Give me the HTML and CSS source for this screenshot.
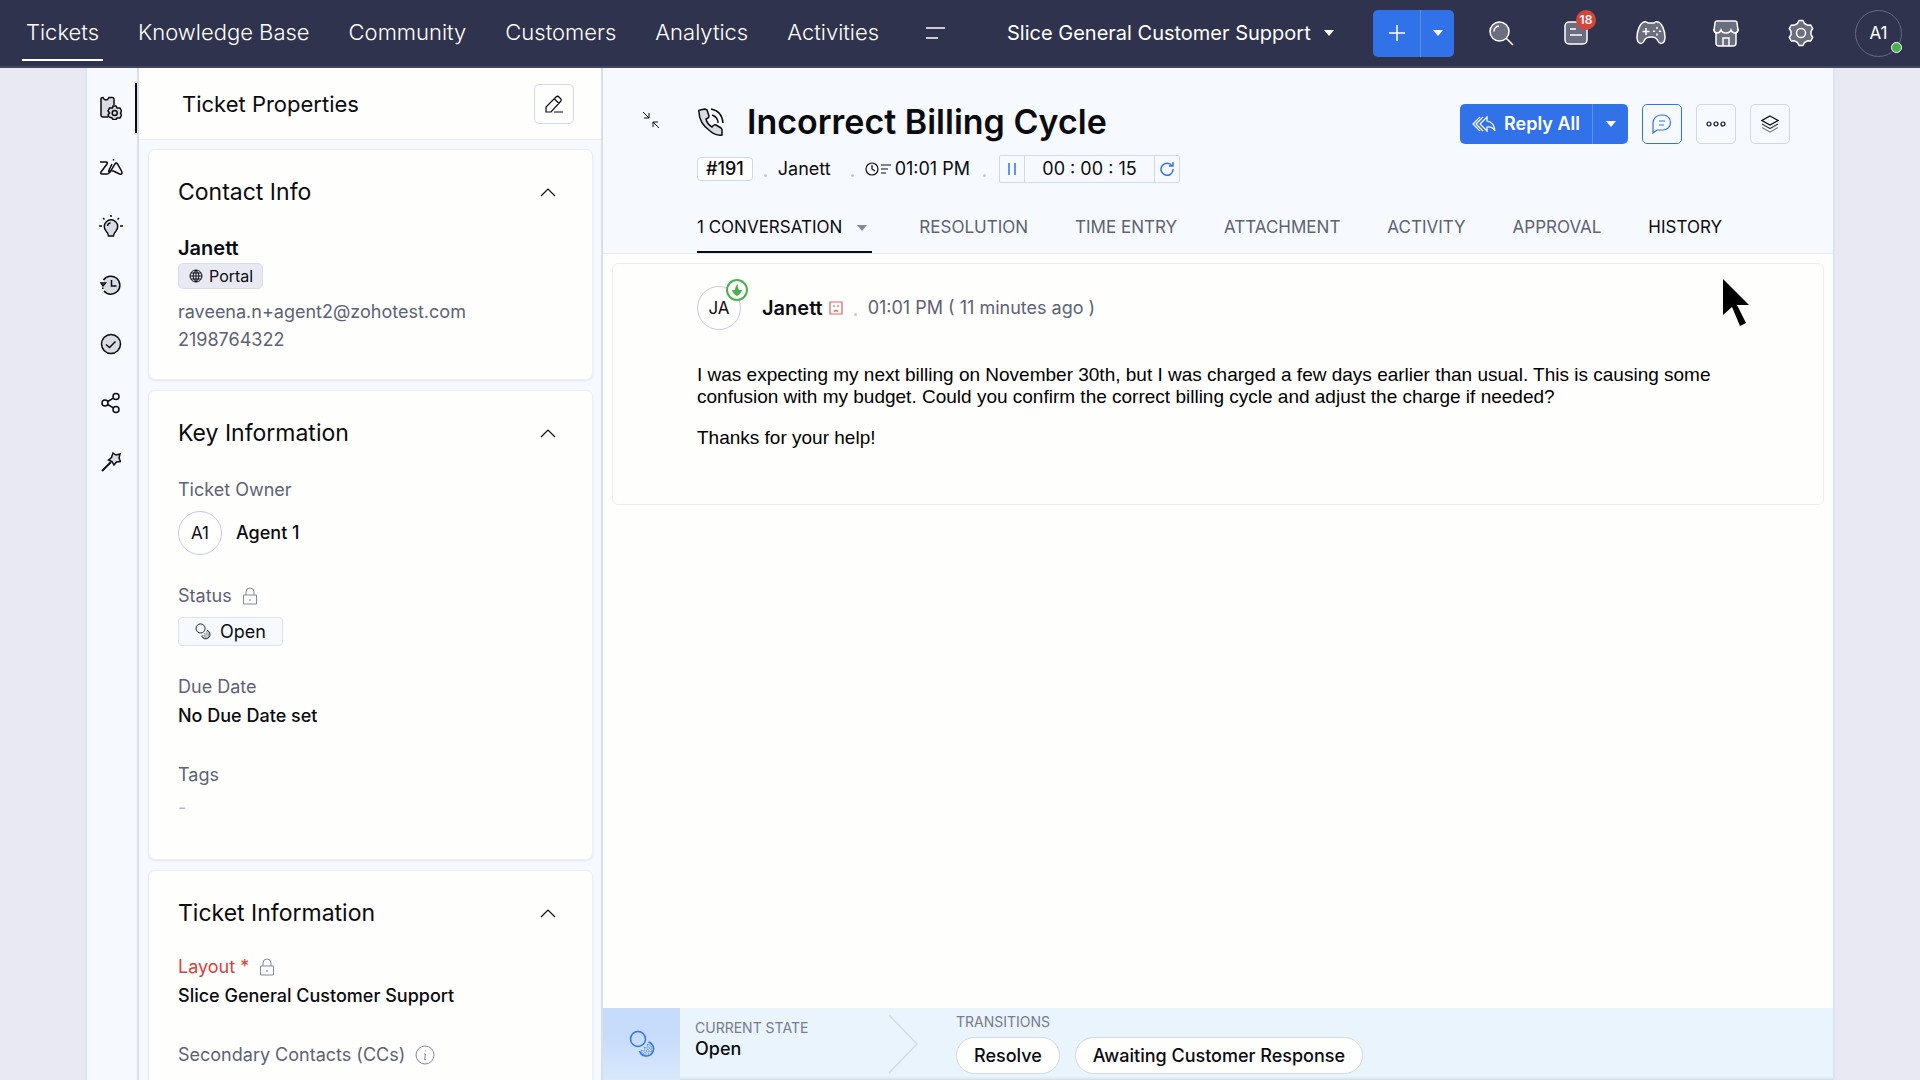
FILE: index.html
```html
<!DOCTYPE html>
<html lang="en">

<head>
    <meta charset="UTF-8">
    <meta name="viewport" content="width=device-width, initial-scale=1.0">
    <title>#191 Incorrect Billing Cycle</title>
    <link rel="stylesheet" href="styles.css">
</head>

<body>
    <!-- Shared icons -->
    <svg class="sprite" aria-hidden="true">
        <symbol id="caret" viewBox="0 0 12 8"><path d="M1 1h10L6 7z" fill="currentColor" stroke="none"/></symbol>
        <symbol id="chevron" viewBox="0 0 16 10"><path d="M1 9l7-7 7 7"/></symbol>
        <symbol id="lock" viewBox="0 0 16 18"><path d="M1.500 8h13v9h-13zM4 8V5a4 4 0 0 1 8 0v3M8 12v2"/></symbol>
        <symbol id="status" viewBox="0 0 26 28">
            <circle cx="9" cy="9" r="7.500"/>
            <path d="M19.500 12a7.200 7.200 0 1 1-9 9"/>
            <path d="M19 14v10M16 17v9M22 16v8M13 20v4M18 15h4M15 18h9M12 21h12M14 24h8" stroke-dasharray="1 1.500" stroke-width="1"/>
        </symbol>
    </svg>

    <header class="navbar">
        <nav class="nav-links">
            <a class="active" href="#">Tickets</a>
            <a href="#">Knowledge Base</a>
            <a href="#">Community</a>
            <a href="#">Customers</a>
            <a href="#">Analytics</a>
            <a href="#">Activities</a>
            <button class="icon-button" type="button" aria-label="More modules">
                <svg width="20" height="14" viewBox="0 0 20 14"><path d="M1 2h19M1 12h12"/></svg>
            </button>
        </nav>

        <div class="nav-tools">
            <div class="department">
                <select aria-label="Department">
                    <option>Slice General Customer Support</option>
                </select>
                <svg width="12" height="8"><use href="#caret"/></svg>
            </div>
            <div class="split-button">
                <button class="add" type="button" aria-label="Add">
                    <svg width="18" height="18" viewBox="0 0 18 18"><path d="M9 1v16M1 9h16"/></svg>
                </button>
                <button class="more" type="button" aria-label="Add options">
                    <svg width="12" height="8"><use href="#caret"/></svg>
                </button>
            </div>
            <div class="nav-icons">
                <button class="icon-button" type="button" aria-label="Search">
                    <svg width="26" height="26" viewBox="0 0 26 26"><circle class="tint" cx="11.500" cy="11.500" r="9.500"/><path d="M18.500 18.500L25 25M6 11.500A5.500 5.500 0 0 1 11 6"/></svg>
                </button>
                <button class="icon-button" type="button" aria-label="Notifications">
                    <svg width="26" height="26" viewBox="0 0 26 26"><rect class="tint" x="2" y="2" width="22" height="22" rx="4"/><path d="M7 9h6M7 15h12"/></svg>
                    <span class="count">18</span>
                </button>
                <button class="icon-button" type="button" aria-label="Gamescope">
                    <svg width="30" height="26" viewBox="0 0 30 26"><path class="tint" d="M8 2q2-1 4 1h6q2-2 4-1c4 1 7 9 7 15 0 7-5 8-7 4-1-3-3-4-7-4s-6 1-7 4c-2 4-7 3-7-4C1 11 4 3 8 2z"/><path d="M10 8v7M6.500 11.500h7"/><path d="M21 7.500v1M21 14v1M17.500 11.300h1M23.500 11.300h1" stroke-linecap="round"/></svg>
                </button>
                <button class="icon-button" type="button" aria-label="Marketplace">
                    <svg width="28" height="28" viewBox="0 0 28 28"><path class="tint" d="M5 2h18q2 0 2 2l1 7q0 2-2 3v10q0 3-3 3H7q-3 0-3-3V14q-2-1-2-3l1-7q0-2 2-2z"/><path d="M2 10q0 4 3 4t4-3q1 3 5 3t5-3q1 3 4 3t3-4M11 27v-8h6v8"/></svg>
                </button>
                <button class="icon-button" type="button" aria-label="Setup">
                    <svg width="26" height="28" viewBox="0 0 26 28"><path class="tint" stroke-linejoin="round" d="M11 1.500h4l1.500 3 3 1.700 3.200-.2 2 3.500-1.700 2.800v3.400l1.700 2.800-2 3.500-3.200-.2-3 1.700-1.500 3h-4l-1.500-3-3-1.700-3.200.2-2-3.500L3 15.700v-3.400L1.300 9.500l2-3.500 3.200.2 3-1.700z"/><circle cx="13" cy="14" r="4.500"/></svg>
                </button>
            </div>
            <button class="profile" type="button" aria-label="Profile">A1<span class="online"></span></button>
        </div>
    </header>

    <div class="workspace">
        <aside class="rail">
            <a class="active" href="#" aria-label="Ticket properties">
                <svg width="22" height="24" viewBox="0 0 22 24"><path class="tint" d="M8 21H3q-2 0-2-2V3q0-1.500 2-1.500 1 2.500 3 2.500t3-2.500h3q2 0 2 2V9"/><path class="tint" d="M13 10h3l1 2 3 0 1.500 3-1 2 1 2-1.500 3h-3l-1 1.500h-3L12 22l-3-1-1-2 1.500-2L8 15l1.500-3h3z"/><circle cx="14.700" cy="17" r="2.500"/></svg>
            </a>
            <a href="#" aria-label="Zia">
                <svg width="24" height="18" viewBox="0 0 24 18"><path d="M1 4h6q2 0 1 2L2 14q-1 2 1 2h5q2 0 3-2l5-8q1-2 2.500 0l4 7q1.500 4-2 3l-6-3q-3-1-4.500 1M13 6l-3 6q-1 3 1.500 2"/><path d="M14.500 1.500v.5" stroke-linecap="round"/></svg>
            </a>
            <a href="#" aria-label="Suggestions">
                <svg width="24" height="24" viewBox="0 0 24 24"><path class="tint" d="M9.500 22q-.5-3-2.500-5a6.700 6.700 0 1 1 10 0q-2 2-2.500 5zM8.500 12q.5-3 3-3"/><path d="M12 1v2M4 4l1.500 1.500M20 4l-1.500 1.500M0 12h3M21 12h3"/></svg>
            </a>
            <a href="#" aria-label="History">
                <svg width="22" height="22" viewBox="0 0 22 22"><path class="tint" d="M3.500 6A9 9 0 1 1 4 17"/><path d="M1 9h4.500L3 12zM11.500 6v6h5M2.500 13.500l.5 1.500"/></svg>
            </a>
            <a href="#" aria-label="Approvals">
                <svg width="22" height="22" viewBox="0 0 22 22"><circle class="tint" cx="11" cy="11" r="9.500"/><path d="M6 11.500l3.500 3 6-6"/></svg>
            </a>
            <a href="#" aria-label="Share">
                <svg width="20" height="22" viewBox="0 0 20 22"><circle cx="4" cy="11" r="3"/><circle cx="15" cy="4.500" r="3"/><circle cx="15" cy="17.500" r="3"/><path d="M6.700 9.500l5.700-3.400M6.700 12.500l5.700 3.400"/></svg>
            </a>
            <a href="#" aria-label="Macros">
                <svg width="20" height="20" viewBox="0 0 20 20"><path class="tint" d="M12 1l3 2 4-1-1 4 1.500 3.500-4 .5-2.500 3-2-3.500L7.500 8l3-2.500z"/><path d="M1 19l9-9" stroke-width="2"/></svg>
            </a>
        </aside>

        <section class="properties">
            <div class="properties-header">
                <h2>Ticket Properties</h2>
                <button class="square-button" type="button" aria-label="Edit">
                    <svg width="20" height="18" viewBox="0 0 20 18"><path d="M2 17v-5L12 2q1.500-1.500 3 0l1.500 1.500q1.500 1.500 0 3L7 17zM10.500 4l4.500 4.500M10 17h9"/></svg>
                </button>
            </div>

            <div class="cards">
                <div class="card contact">
                    <div class="card-title">
                        <h3>Contact Info</h3>
                        <button type="button" aria-label="Collapse"><svg width="16" height="10"><use href="#chevron"/></svg></button>
                    </div>
                    <a class="contact-name" href="#">Janett</a>
                    <span class="portal">
                        <svg width="14" height="14" viewBox="0 0 14 14"><circle cx="7" cy="7" r="6"/><path d="M7 1v12M1 7h12M2 4h10M2 10h10M7 1Q1 7 7 13M7 1q6 6 0 12"/></svg>
                        Portal
                    </span>
                    <a class="contact-line" href="#">raveena.n+agent2@zohotest.com</a>
                    <a class="contact-line" href="#">2198764322</a>
                </div>

                <div class="card key-info">
                    <div class="card-title">
                        <h3>Key Information</h3>
                        <button type="button" aria-label="Collapse"><svg width="16" height="10"><use href="#chevron"/></svg></button>
                    </div>
                    <div class="field spaced">
                        <span class="label">Ticket Owner</span>
                        <div class="owner"><span class="avatar">A1</span>Agent 1</div>
                    </div>
                    <div class="field spaced">
                        <span class="label">Status <svg width="16" height="18"><use href="#lock"/></svg></span>
                        <button class="status" type="button"><svg width="16" height="17"><use href="#status"/></svg>Open</button>
                    </div>
                    <div class="field">
                        <span class="label">Due Date</span>
                        <span class="value">No Due Date set</span>
                    </div>
                    <div class="field spaced">
                        <span class="label">Tags</span>
                        <span class="value empty">-</span>
                    </div>
                </div>

                <div class="card ticket-info">
                    <div class="card-title">
                        <h3>Ticket Information</h3>
                        <button type="button" aria-label="Collapse"><svg width="16" height="10"><use href="#chevron"/></svg></button>
                    </div>
                    <div class="field">
                        <span class="label required">Layout * <svg width="16" height="18"><use href="#lock"/></svg></span>
                        <span class="value">Slice General Customer Support</span>
                    </div>
                    <div class="field">
                        <span class="label">Secondary Contacts (CCs)
                            <svg width="20" height="20" viewBox="0 0 20 20"><circle cx="10" cy="10" r="9"/><path d="M10.500 5.500v1M9 9h1.500l-1 5.500H11"/></svg>
                        </span>
                    </div>
                </div>
            </div>
        </section>

        <main class="ticket">
            <div class="ticket-header">
                <button class="collapse" type="button" aria-label="Collapse view">
                    <svg width="16" height="16" viewBox="0 0 16 16"><path d="M0 0l6 6M6 1v5H1M16 16l-6-6M15 10h-5v5"/></svg>
                </button>
                <div class="heading">
                    <div class="subject">
                        <svg class="phone" width="30" height="30" viewBox="0 0 30 30"><path class="tint" stroke-linejoin="round" d="M2 5q-1-2 1-2l5-1 2 1 2 6q0 2-3 3 1 5 6 8 2-3 4-2l5 3q1 1 1 2v5q-6 1-12-4Q2 16 2 5z"/><path d="M14 2q11 2 12 14M15 8q6 2 6 8"/></svg>
                        <h1>Incorrect Billing Cycle</h1>
                    </div>
                    <div class="meta">
                        <span class="ticket-id">#191</span>
                        <span class="dot"></span>
                        <a class="requester" href="#">Janett</a>
                        <span class="dot"></span>
                        <span class="created">
                            <svg width="26" height="14" viewBox="0 0 26 14"><circle cx="7" cy="7" r="6"/><path d="M7 3v4l3 2M16 3h10M16 7h7M16 11h5"/></svg>
                            01:01 PM
                        </span>
                        <span class="dot"></span>
                        <div class="timer">
                            <button type="button" aria-label="Pause"><svg width="8" height="12" viewBox="0 0 8 12"><path d="M1 0v12M7 0v12"/></svg></button>
                            <span class="time">00 : 00 : 15</span>
                            <button type="button" aria-label="Restart"><svg width="14" height="14" viewBox="0 0 14 14"><path d="M12 4a6 6 0 1 0 1 3M13 0v4H9"/></svg></button>
                        </div>
                    </div>
                </div>
                <div class="actions">
                    <div class="split-button reply">
                        <button class="add" type="button">
                            <svg width="24" height="18" viewBox="0 0 24 18"><path d="M15 2L8 9l7 7v-4q5-1 8 4-1-9-8-10zM8 2L1 9l7 7M11 2L4 9l7 7"/></svg>
                            Reply All
                        </button>
                        <button class="more" type="button" aria-label="Reply options"><svg width="12" height="8"><use href="#caret"/></svg></button>
                    </div>
                    <button class="square-button primary" type="button" aria-label="Comment">
                        <svg width="20" height="20" viewBox="0 0 20 20"><path d="M1 19V9a8 8 0 0 1 8-8h2a7.500 7.500 0 0 1 0 15H5zM7 7h6M7 11h5"/></svg>
                    </button>
                    <button class="square-button" type="button" aria-label="More actions">
                        <svg width="20" height="6" viewBox="0 0 20 6"><circle cx="3" cy="3" r="2"/><circle cx="10" cy="3" r="2"/><circle cx="17" cy="3" r="2"/></svg>
                    </button>
                    <button class="square-button" type="button" aria-label="Views">
                        <svg width="18" height="18" viewBox="0 0 18 18"><path d="M9 1l8 4.500L9 10 1 5.500z"/><path d="M1 9l8 4.500L17 9" opacity=".8"/><path d="M1 12.500L9 17l8-4.500" opacity=".5"/></svg>
                    </button>
                </div>
            </div>

            <nav class="tabs">
                <a class="active" href="#">1 CONVERSATION <svg width="12" height="8"><use href="#caret"/></svg></a>
                <a href="#">RESOLUTION</a>
                <a href="#">TIME ENTRY</a>
                <a href="#">ATTACHMENT</a>
                <a href="#">ACTIVITY</a>
                <a href="#">APPROVAL</a>
                <a class="hovered" href="#">HISTORY</a>
            </nav>

            <div class="conversation">
                <article class="message">
                    <div class="message-header">
                        <span class="avatar">JA
                            <span class="incoming"><svg width="10" height="12" viewBox="0 0 10 12"><path d="M6 0Q3 2 3 6H0q1 4 5 6 4-2 5-6H7Q5 3 6 0z"/></svg></span>
                        </span>
                        <a class="sender" href="#">Janett</a>
                        <svg class="mood" width="14" height="14" viewBox="0 0 14 14"><path d="M1 1h12v12H1zM5 4v2M9 4v2M5 10.500q2-2 4 0"/></svg>
                        <span class="dot"></span>
                        <time>01:01 PM ( 11 minutes ago )</time>
                    </div>
                    <div class="message-body">
                        <p>I was expecting my next billing on November 30th, but I was charged a few days earlier than usual. This is causing some confusion with my budget. Could you confirm the correct billing cycle and adjust the charge if needed?</p>
                        <p>Thanks for your help!</p>
                    </div>
                    <svg class="pointer" width="28" height="48" viewBox="0 0 28 48"><path d="M1 1l26 26H15l9 18-6 3-8-19-9 8z"/></svg>
                </article>
            </div>

            <footer class="blueprint">
                <div class="blueprint-icon"><svg width="26" height="28"><use href="#status"/></svg></div>
                <div class="state">
                    <span class="caption">CURRENT STATE</span>
                    <strong>Open</strong>
                </div>
                <svg class="divider" width="30" height="60" viewBox="0 0 30 60"><path d="M1 1l28 29L1 59"/></svg>
                <div class="transitions">
                    <span class="caption">TRANSITIONS</span>
                    <div class="pills">
                        <button type="button">Resolve</button>
                        <button type="button">Awaiting Customer Response</button>
                    </div>
                </div>
            </footer>
        </main>
    </div>
</body>

</html>
```
FILE: styles.css
```css
* {
    margin: 0;
    padding: 0;
    box-sizing: border-box;
}

body {
    background: #e9e9f4;
    color: #0b0b10;
    font-family: Inter, "Liberation Sans", sans-serif;
    font-size: 18px;
    line-height: 24px;
    height: 100vh;
    display: flex;
    flex-direction: column;
    overflow: hidden;
}

a {
    color: inherit;
    text-decoration: none;
}

button,
select {
    font: inherit;
    color: inherit;
    background: none;
    border: none;
    cursor: pointer;
}

svg {
    display: block;
    flex: none;
    fill: none;
    stroke: currentColor;
    stroke-width: 1.5;
}

.sprite {
    position: absolute;
    width: 0;
    height: 0;
}

/* Navbar */
.navbar {
    height: 68px;
    flex: none;
    background: #2f334d;
    border-bottom: 2px solid #454562;
    color: #fff;
    display: flex;
    justify-content: space-between;
    align-items: center;
    padding: 0 18px 0 22px;
}

.nav-links {
    display: flex;
    align-items: center;
    gap: 31px;
    font-size: 22px;
    font-weight: 300;
}

.nav-links a {
    padding: 15px 4px;
    border-bottom: 2px solid transparent;
}

.nav-links a.active {
    border-color: #fff;
}

.nav-links .icon-button {
    margin-left: 11px;
}

.nav-tools,
.nav-icons,
.department {
    display: flex;
    align-items: center;
}

.department {
    font-size: 20px;
    margin-right: 38px;
    position: relative;
}

.department select {
    appearance: none;
    padding-right: 24px;
}

.department svg {
    position: absolute;
    right: 0;
    pointer-events: none;
}

.split-button {
    display: flex;
    height: 47px;
    background: #3272e8;
    border-radius: 5px;
    color: #fff;
}

.split-button button {
    display: flex;
    align-items: center;
    justify-content: center;
}

.split-button .add {
    width: 47px;
}

.split-button .more {
    width: 34px;
    border-left: 1px solid #5b90f0;
}

.nav-icons {
    margin: 0 17px 0 9px;
}

.nav-icons .icon-button {
    width: 75px;
    height: 28px;
    display: flex;
    align-items: center;
    justify-content: center;
    position: relative;
}

.nav-icons .tint {
    fill: #6b6e7e;
}

.count {
    position: absolute;
    top: -9px;
    left: 38px;
    width: 20px;
    height: 20px;
    border-radius: 50%;
    background: #d2463c;
    font-size: 12px;
    line-height: 20px;
    font-weight: 600;
}

.profile {
    width: 47px;
    height: 47px;
    border: 1px solid #666a80;
    border-radius: 50%;
    font-size: 17px;
    position: relative;
}

.online {
    position: absolute;
    right: -1px;
    bottom: 3px;
    width: 11px;
    height: 11px;
    border: 1px solid #fff;
    border-radius: 50%;
    background: #4caf50;
}

/* Page columns */
.workspace {
    flex: 1;
    min-height: 0;
    margin: 0 85px;
    border-left: 2px solid #dbe4f0;
    border-right: 2px solid #dbe4f0;
    background: #f6fafe;
    display: flex;
}

.rail {
    width: 52px;
    flex: none;
    border-right: 2px solid #d8deea;
    padding-top: 15px;
    display: flex;
    flex-direction: column;
    gap: 9px;
}

.rail a {
    height: 50px;
    display: flex;
    align-items: center;
    justify-content: center;
    border-right: 2px solid transparent;
}

.rail a.active {
    border-color: #0b0b10;
}

.tint {
    fill: #dadbe3;
}

/* Ticket properties */
.properties {
    width: 464px;
    flex: none;
    display: flex;
    flex-direction: column;
    border-right: 2px solid #d8deea;
}

.properties-header {
    height: 72px;
    flex: none;
    background: #fefefd;
    border-bottom: 1px solid #e9edf5;
    padding: 0 27px 0 43px;
    display: flex;
    align-items: center;
    justify-content: space-between;
}

.properties-header h2 {
    font-size: 22px;
    font-weight: 400;
}

.square-button {
    width: 40px;
    height: 40px;
    border: 1px solid #d2d9e6;
    border-radius: 5px;
    display: flex;
    align-items: center;
    justify-content: center;
}

.square-button svg {
    stroke-width: 1.2;
}

.square-button.primary {
    border-color: #3272e8;
    color: #3272e8;
}

.cards {
    flex: 1;
    min-height: 0;
    overflow: hidden;
    padding: 9px 8px 0 9px;
    display: flex;
    flex-direction: column;
    gap: 10px;
}

.card {
    flex: none;
    background: #fefefd;
    border: 1px solid #ebeef6;
    border-radius: 7px;
    box-shadow: 0 1px 2px #e4e6f1;
    padding: 27px 36px 25px 29px;
    display: flex;
    flex-direction: column;
    align-items: flex-start;
}

.card-title {
    width: 100%;
    display: flex;
    align-items: center;
    justify-content: space-between;
    line-height: 30px;
}

.card-title svg {
    stroke-width: 1.2;
}

.card h3 {
    font-size: 23px;
    font-weight: 400;
}

.contact-name {
    margin-top: 29px;
    font-size: 20px;
    font-weight: 600;
}

.portal {
    margin: 3px 0 9px;
    height: 26px;
    padding: 0 9px 0 10px;
    background: #e9e9f4;
    border: 1px solid #d8deea;
    border-radius: 5px;
    font-size: 16px;
    display: flex;
    align-items: center;
    gap: 6px;
}

.portal svg {
    stroke-width: 1;
}

.contact-line {
    line-height: 28px;
    color: #5d6275;
}

.key-info {
    padding-bottom: 39px;
}

.field {
    display: flex;
    flex-direction: column;
    align-items: flex-start;
    gap: 5px;
    padding-bottom: 35px;
}

.field.spaced {
    gap: 9px;
    padding-bottom: 29px;
}

.card .field:last-child {
    padding-bottom: 0;
}

.card-title + .field {
    margin-top: 30px;
}

.ticket-info .card-title + .field {
    margin-top: 27px;
}

.label {
    color: #5d6275;
    display: flex;
    align-items: center;
    gap: 10px;
}

.label svg {
    stroke: #85899a;
    stroke-width: 1;
}

.label.required {
    color: #d8403a;
}

.value,
.owner {
    font-weight: 500;
}

.value.empty {
    color: #b6b9c6;
    font-weight: 400;
}

.owner {
    display: flex;
    align-items: center;
    gap: 14px;
}

.avatar {
    width: 44px;
    height: 44px;
    border: 1px solid #c9cade;
    border-radius: 50%;
    font-size: 17px;
    font-weight: 400;
    display: flex;
    align-items: center;
    justify-content: center;
    position: relative;
}

.status {
    height: 29px;
    padding: 0 16px;
    background: #f6fafe;
    border: 1px solid #d9e3f1;
    border-radius: 4px;
    display: flex;
    align-items: center;
    gap: 9px;
}

/* Ticket */
.ticket {
    flex: 1;
    min-width: 0;
    display: flex;
    flex-direction: column;
}

.ticket-header {
    display: flex;
    align-items: flex-start;
    padding: 36px 43px 0 40px;
}

.collapse {
    width: 16px;
    margin: 8px 38px 0 0;
}

.collapse svg {
    stroke-width: 1;
}

.heading {
    flex: 1;
}

.subject {
    display: flex;
    align-items: center;
    gap: 20px;
    line-height: 36px;
}

h1 {
    font-size: 34px;
    font-weight: 600;
}

.meta {
    margin-top: 15px;
    display: flex;
    align-items: center;
}

.dot {
    width: 3px;
    height: 3px;
    border-radius: 50%;
    background: #c4c8d4;
    margin: 12px 11px 0;
}

.ticket-id {
    background: #fefefd;
    border: 1px solid #d2d9e6;
    border-radius: 4px;
    padding: 0 8px;
    line-height: 22px;
    font-weight: 500;
}

.requester {
    margin-right: 9px;
}

.created {
    display: flex;
    align-items: center;
    gap: 4px;
    margin-right: 2px;
}

.created svg {
    stroke-width: 1.2;
}

.timer {
    height: 28px;
    border: 1px solid #d2d9e6;
    border-radius: 2px;
    display: flex;
    margin-left: 2px;
}

.timer button {
    width: 24px;
    color: #3272e8;
    display: flex;
    align-items: center;
    justify-content: center;
}

.timer .time {
    width: 131px;
    border: 1px solid #d2d9e6;
    border-width: 0 1px;
    line-height: 26px;
    text-align: center;
}

.actions {
    display: flex;
    gap: 14px;
}

.reply {
    height: 40px;
}

.reply .add {
    width: 132px;
    gap: 8px;
    font-weight: 600;
}

.reply .add svg {
    stroke-width: 1.2;
}

.reply .more {
    width: 36px;
}

.tabs {
    display: flex;
    gap: 47px;
    margin-top: 19px;
    padding-left: 94px;
    border-bottom: 1px solid #e4ebf3;
    font-size: 17px;
    color: #5d6275;
}

.tabs a {
    height: 51px;
    padding-top: 13px;
    display: flex;
    gap: 14px;
    border-bottom: 2px solid transparent;
}

.tabs svg {
    margin: 9px 4px 0 0;
    color: #85899a;
}

.tabs .active {
    color: #0b0b10;
    border-color: #0b0b10;
}

.tabs .hovered {
    color: #0b0b10;
}

.conversation {
    flex: 1;
    min-height: 0;
    background: #fefefd;
    padding: 9px;
}

.message {
    border: 1px solid #ebeef6;
    border-radius: 6px;
    padding: 22px 84px 55px;
    position: relative;
}

.message-header {
    display: flex;
    align-items: center;
}

.incoming {
    position: absolute;
    top: -8px;
    right: -8px;
    width: 22px;
    height: 22px;
    border: 2px solid #4caf50;
    border-radius: 50%;
    background: #fefefd;
    display: flex;
    align-items: center;
    justify-content: center;
}

.incoming path {
    fill: #4caf50;
    stroke: none;
}

.sender {
    margin: 0 6px 0 21px;
    font-size: 20px;
    font-weight: 600;
}

.mood {
    color: #e5605b;
    stroke-width: 1.2;
}

.message time {
    color: #5d6275;
}

.message-body {
    margin-top: 34px;
    font-family: "Liberation Sans", Arial, sans-serif;
    font-size: 19px;
    line-height: 22px;
    color: #000;
}

.message-body p + p {
    margin-top: 19px;
}

.pointer {
    position: absolute;
    top: 14px;
    right: 73px;
    fill: #000;
    stroke: none;
}

/* Blueprint bar */
.blueprint {
    height: 72px;
    flex: none;
    background: #e9f4fc;
    display: flex;
    align-items: center;
    box-shadow: inset 0 -3px 3px -2px #ccd5df;
}

.blueprint-icon {
    width: 77px;
    height: 100%;
    background: linear-gradient(#c7dcfb 40%, #d9e9fb);
    color: #3272e8;
    display: flex;
    align-items: center;
    justify-content: center;
}

.state {
    width: 194px;
    padding: 0 0 8px 15px;
    display: flex;
    flex-direction: column;
}

.state strong {
    font-weight: 500;
}

.caption {
    font-size: 14px;
    line-height: 18px;
    color: #777b8c;
}

.divider {
    margin: 0 38px 0 14px;
    stroke: #cfdcec;
}

.transitions {
    display: flex;
    flex-direction: column;
    gap: 6px;
    padding-bottom: 1px;
}

.pills {
    display: flex;
    gap: 15px;
}

.pills button {
    height: 37px;
    padding: 0 17px;
    background: #fefefd;
    border: 1px solid #d2d9e6;
    border-radius: 19px;
    font-weight: 500;
}
```
